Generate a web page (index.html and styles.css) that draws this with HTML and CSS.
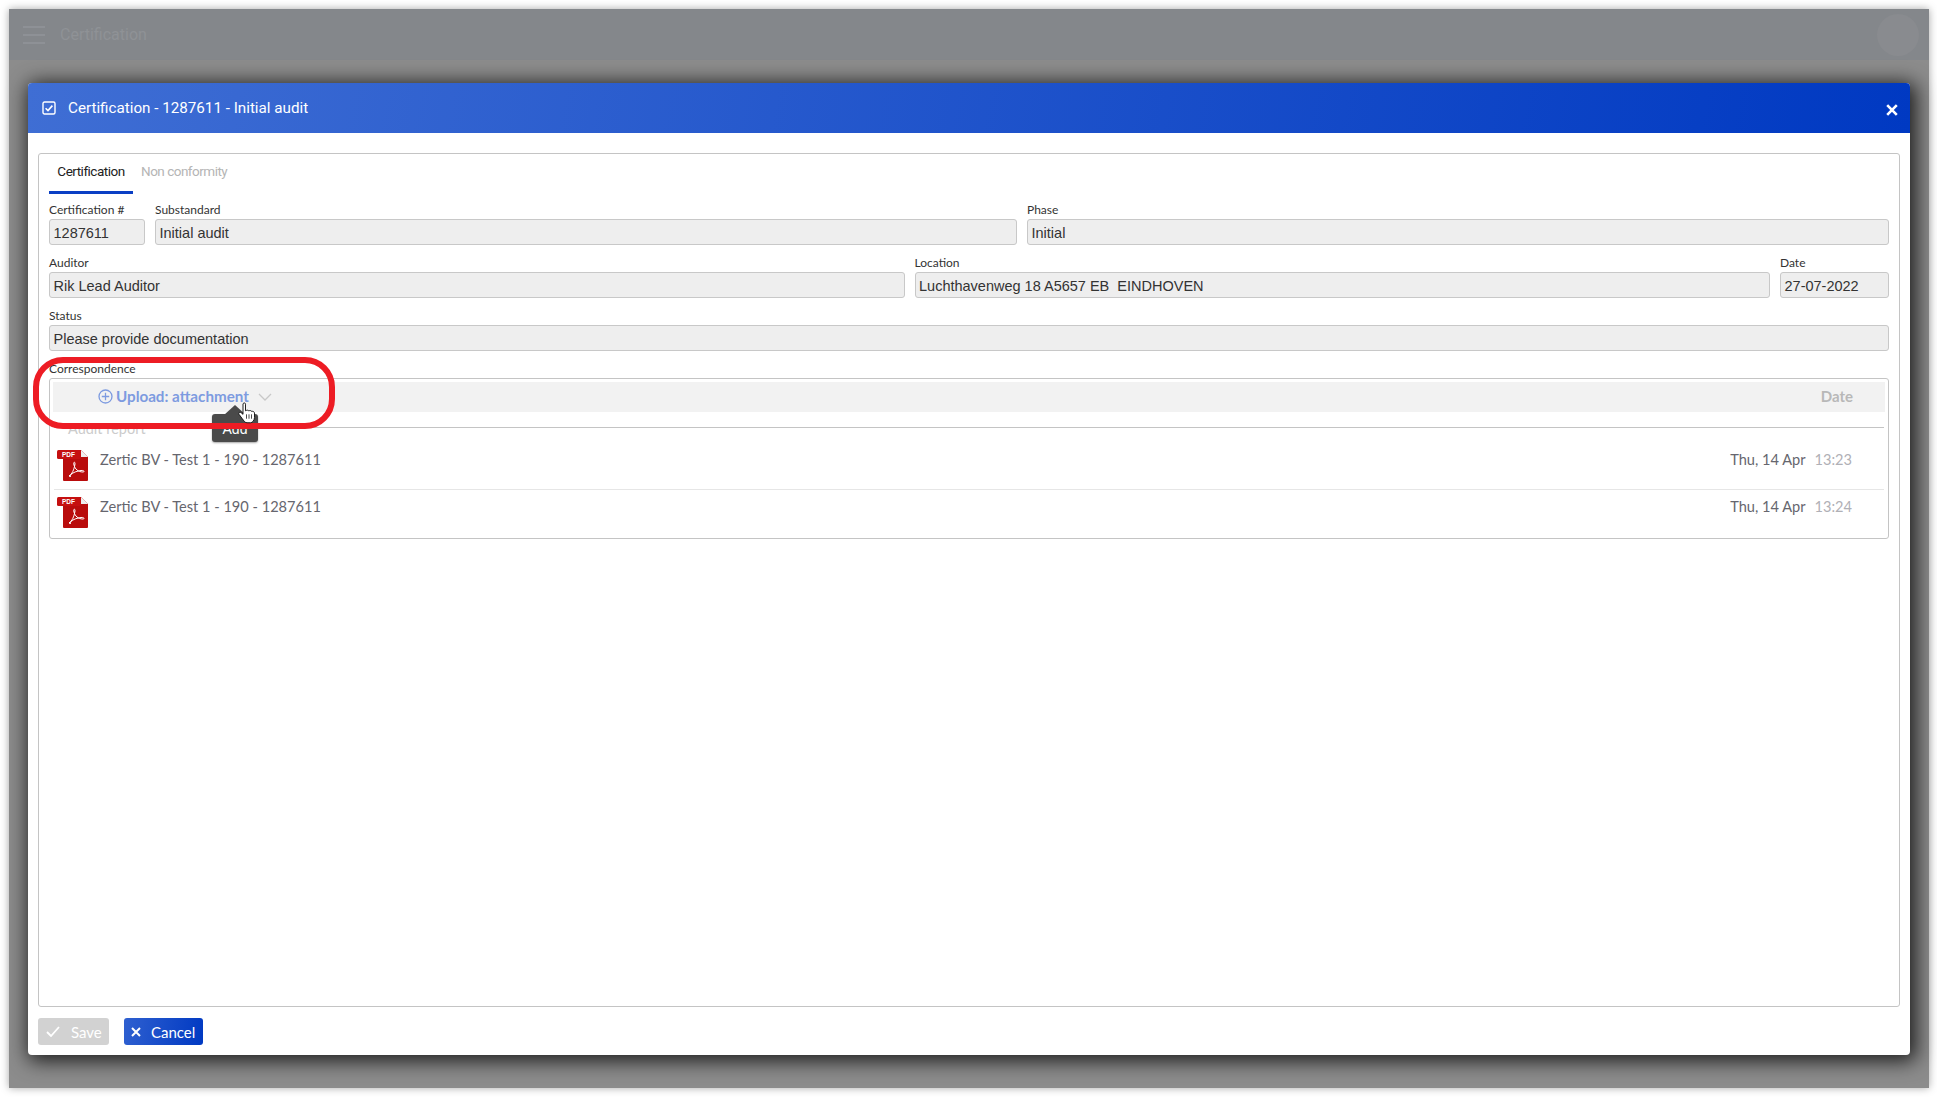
FILE: index.html
```html
<!DOCTYPE html>
<html lang="en">
<head>
<meta charset="utf-8">
<title>Certification</title>
<link rel="stylesheet" href="styles.css">
</head>
<body>
<div class="frame">
  <header class="appbar">
    <svg class="burger" width="22" height="20" viewBox="0 0 22 20"><path d="M0 2h22M0 10h22M0 18h22" stroke="#8e9196" stroke-width="2"/></svg>
    <span class="apptitle">Certification</span>
    <span class="avatar"></span>
  </header>
  <section class="modal">
    <div class="modal-head">
      <svg class="head-check" width="14" height="14" viewBox="0 0 14 14"><rect x="1" y="1" width="12" height="12" rx="1.5" fill="none" stroke="#fff" stroke-width="1.4"/><path d="M3.6 7.2l2.4 2.4 4.4-5" fill="none" stroke="#fff" stroke-width="1.6"/></svg>
      <span class="modal-title">Certification - 1287611 - Initial audit</span>
      <svg class="head-close" width="12" height="12" viewBox="0 0 12 12"><path d="M1.2 1.2l9.6 9.6M10.8 1.2l-9.6 9.6" stroke="#fff" stroke-width="2.6"/></svg>
    </div>
    <div class="panel">
      <nav class="tabs">
        <span class="tab active">Certification</span>
        <span class="tab">Non conformity</span>
      </nav>
      <div class="row row-a">
        <div class="field"><label>Certification #</label><div class="input">1287611</div></div>
        <div class="field"><label>Substandard</label><div class="input">Initial audit</div></div>
        <div class="field"><label>Phase</label><div class="input">Initial</div></div>
      </div>
      <div class="row row-b">
        <div class="field"><label>Auditor</label><div class="input">Rik Lead Auditor</div></div>
        <div class="field"><label>Location</label><div class="input">Luchthavenweg 18 A5657 EB&nbsp; EINDHOVEN</div></div>
        <div class="field"><label>Date</label><div class="input">27-07-2022</div></div>
      </div>
      <div class="row row-c">
        <div class="field"><label>Status</label><div class="input">Please provide documentation</div></div>
      </div>
      <label class="corr-label">Correspondence</label>
      <div class="corr">
        <div class="corr-head">
          <svg class="plus" width="15" height="15" viewBox="0 0 15 15"><circle cx="7.5" cy="7.5" r="6.5" fill="none" stroke="#7d9be0" stroke-width="1.3"/><path d="M7.5 3.8v7.4M3.8 7.5h7.4" stroke="#7d9be0" stroke-width="1.3"/></svg>
          <span class="upload">Upload: attachment</span>
          <svg class="chev" width="14" height="8" viewBox="0 0 14 8"><path d="M1 1l6 6 6-6" fill="none" stroke="#c8c8c8" stroke-width="1.3"/></svg>
          <span class="head-date">Date</span>
        </div>
        <div class="group">Audit report</div>
        <div class="doc">
          <svg class="pdf" width="32" height="33" viewBox="0 0 32 33"><path d="M6 1h18l7 7v23a1 1 0 0 1-1 1H7a1 1 0 0 1-1-1z" fill="#b90c0c"/><path d="M24 1l7 7h-7z" fill="#eee"/><rect x="0" y="1" width="24" height="9" rx="1.5" fill="#c51010"/><text x="5" y="8" class="pdf-tag">PDF</text><path d="M12 27c3-2 5-6 6-12 0-3-2-2-1 1 1 4 4 7 9 7 2 0 1-2-2-1.500-4 .5-8 2-10 4-2 1.500-2 2.500 0 1.500z" fill="none" stroke="#fff" stroke-width="1"/></svg>
          <span class="doc-name">Zertic BV - Test 1 - 190 - 1287611</span>
          <span class="doc-date">Thu, 14 Apr</span>
          <span class="doc-time">13:23</span>
        </div>
        <div class="doc second">
          <svg class="pdf" width="32" height="33" viewBox="0 0 32 33"><path d="M6 1h18l7 7v23a1 1 0 0 1-1 1H7a1 1 0 0 1-1-1z" fill="#b90c0c"/><path d="M24 1l7 7h-7z" fill="#eee"/><rect x="0" y="1" width="24" height="9" rx="1.5" fill="#c51010"/><text x="5" y="8" class="pdf-tag">PDF</text><path d="M12 27c3-2 5-6 6-12 0-3-2-2-1 1 1 4 4 7 9 7 2 0 1-2-2-1.500-4 .5-8 2-10 4-2 1.500-2 2.500 0 1.500z" fill="none" stroke="#fff" stroke-width="1"/></svg>
          <span class="doc-name">Zertic BV - Test 1 - 190 - 1287611</span>
          <span class="doc-date">Thu, 14 Apr</span>
          <span class="doc-time">13:24</span>
        </div>
      </div>
    </div>
    <footer class="modal-foot">
      <button class="btn save"><svg width="14" height="11" viewBox="0 0 14 11"><path d="M1 6l4 4 8-9" fill="none" stroke="#fff" stroke-width="1.800"/></svg>Save</button>
      <button class="btn cancel"><svg width="10" height="10" viewBox="0 0 10 10"><path d="M1 1l8 8M9 1L1 9" stroke="#fff" stroke-width="2"/></svg>Cancel</button>
    </footer>
  </section>
  <div class="tooltip"><span class="tip-arrow"></span>Add</div>
  <div class="callout"></div>
  <svg class="cursor" width="18" height="22" viewBox="0 0 18 25" preserveAspectRatio="none"><path d="M5 2c1-1.500 2.500-1 2.500.5V10l1-.5c1-.5 2 0 2 .5l1-.2c1-.3 2 .2 2 .8l1 0c1 0 2 1 2 2v5c0 3-2 6-4 6H9c-2 0-3-2-5-5L1 14c-1-2 1-3 2-2l2 2z" fill="#fff" stroke="#111" stroke-width="1"/><path d="M8.500 14v5M11 14v5M13.500 14v5" stroke="#111" stroke-width=".8"/></svg>
</div>
</body>
</html>
```
FILE: styles.css
```css
* { box-sizing: border-box; }
html, body { margin: 0; height: 100%; background: #fff; overflow: hidden; }
body { padding: 9px 8px 9px 9px; }

.frame {
  position: relative;
  width: 1920px;
  height: 1079px;
  background: #8c8c8c;
  box-shadow: 0 0 8px rgba(0,0,0,.35);
}
.appbar {
  display: flex;
  align-items: center;
  height: 51px;
  padding: 0 10px 0 14px;
  background: #84878b;
}
.burger { margin-right: 15px; }
.apptitle { font: 400 16px Roboto, sans-serif; color: #8f9296; }
.avatar { margin-left: auto; width: 42px; height: 42px; border-radius: 50%; background: #898b8f; }

.modal {
  position: absolute;
  left: 19px;
  top: 74px;
  width: 1882px;
  height: 972px;
  display: flex;
  flex-direction: column;
  background: #fff;
  border-radius: 4px;
  box-shadow: 3px 3px 20px 3px rgba(0,0,0,.8);
}
.modal-head {
  display: flex;
  align-items: center;
  height: 50px;
  flex: none;
  padding: 0 12px 0 14px;
  color: #fff;
  border-radius: 4px 4px 0 0;
  background: linear-gradient(100deg, #3f6ed4 0%, #0039c2 100%);
}
.head-check { margin-right: 12px; }
.modal-title { font: 400 15.2px Roboto, sans-serif; }
.head-close { margin-left: auto; margin-top: 4px; }

.panel {
  flex: 1;
  margin: 20px 10px 0 10px;
  padding: 0 10px;
  border: 1px solid #c4c4c4;
  border-radius: 3px;
}
.tabs { display: flex; height: 40px; margin-bottom: 8px; }
.tab {
  display: flex;
  align-items: center;
  justify-content: center;
  font: 400 13.5px Roboto, sans-serif;
  letter-spacing: -.5px;
  color: #b5b5b5;
  padding: 0 8px 3px 8px;
  border-bottom: 3px solid transparent;
}
.tab.active { width: 84px; color: #222; border-bottom-color: #0a3fc4; }

.row { display: grid; gap: 10px; height: 53px; }
.row-a { grid-template-columns: 96px 1fr 1fr; }
.row-b { grid-template-columns: 1fr 1fr 109px; }
.row-c { grid-template-columns: 1fr; }
.field { display: flex; flex-direction: column; min-width: 0; }
.field label, .corr-label {
  height: 17px;
  font: 400 12px/16px Lato, sans-serif;
  color: #333;
}
.input {
  height: 26px;
  padding: 0 3px 0 3.5px;
  background: #eee;
  border: 1px solid #c8c8c8;
  border-radius: 3px;
  font: 400 14.5px/26px "Liberation Sans", sans-serif;
  color: #333;
  white-space: nowrap;
}
.corr-label { display: block; }
.corr {
  height: 161px;
  padding: 3px;
  border: 1px solid #c4c4c4;
  border-radius: 3px;
}
.corr-head {
  display: flex;
  align-items: center;
  height: 30px;
  padding: 0 0 2px 45px;
  background: #f2f2f2;
}
.plus { margin-right: 3.5px; margin-left: -.5px; }
.upload { font: 700 15.2px Lato, sans-serif; color: #7d9be0; }
.chev { margin-left: 9px; margin-top: 1px; }
.head-date { margin-left: auto; margin-right: 32px; font: 700 15px Lato, sans-serif; color: #b8b8b8; }
.group {
  height: 15px;
  margin: 0 1px;
  padding-left: 14px;
  font: 400 14.5px/33px Lato, sans-serif;
  color: #ccc;
  border-bottom: 1px solid #c4c4c4;
  box-sizing: content-box;
  overflow: visible;
}
.doc {
  position: relative;
  display: flex;
  align-items: flex-start;
  height: 62px;
  margin: 0 1px;
  padding: 21px 32px 0 3px;
  border-bottom: 1px solid #e6e6e6;
  font: 400 14.6px/22px Lato, sans-serif;
  color: #66666e;
}
.doc.second { height: 47px; padding-top: 6px; border-bottom: 0; }
.pdf { flex: none; margin-right: 11px; }
.pdf-tag { font: 700 6.5px "Liberation Sans", sans-serif; fill: #fff; }
.doc-date { margin-left: auto; }
.doc-time { margin-left: 9px; color: #b0b0b6; }

.modal-foot {
  display: flex;
  flex: none;
  gap: 15px;
  height: 48px;
  padding: 11px 10px 0;
}
.btn {
  display: inline-flex;
  align-items: center;
  height: 27px;
  padding-bottom: 1px;
  border: 0;
  border-radius: 3px;
  font: 400 15px Lato, sans-serif;
  color: #fff;
}
.btn.save { width: 71px; padding-left: 8px; padding-right: 0; gap: 11px; background: #d2d2d2; }
.btn.cancel { width: 79px; padding-left: 7px; padding-right: 0; gap: 10px; background: linear-gradient(100deg, #2f60d0, #0039c2); }

.tooltip {
  position: absolute;
  left: 203px;
  top: 405px;
  width: 46px;
  height: 28px;
  padding-top: 5px;
  text-align: center;
  font: 400 14px/20px "Liberation Sans", sans-serif;
  color: #fff;
  background: #4a4a4a;
  border-radius: 3px;
  box-shadow: 0 1px 2px rgba(0,0,0,.35);
}
.tip-arrow {
  position: absolute;
  left: 12px;
  top: -9px;
  width: 0;
  height: 0;
  border: 11px solid transparent;
  border-top: 0;
  border-bottom: 10px solid #4a4a4a;
}
.callout {
  position: absolute;
  left: 24px;
  top: 348px;
  width: 302px;
  height: 72px;
  border: 6px solid #ed1c24;
  border-radius: 30px;
}
.cursor { position: absolute; left: 229px; top: 393px; }
```
